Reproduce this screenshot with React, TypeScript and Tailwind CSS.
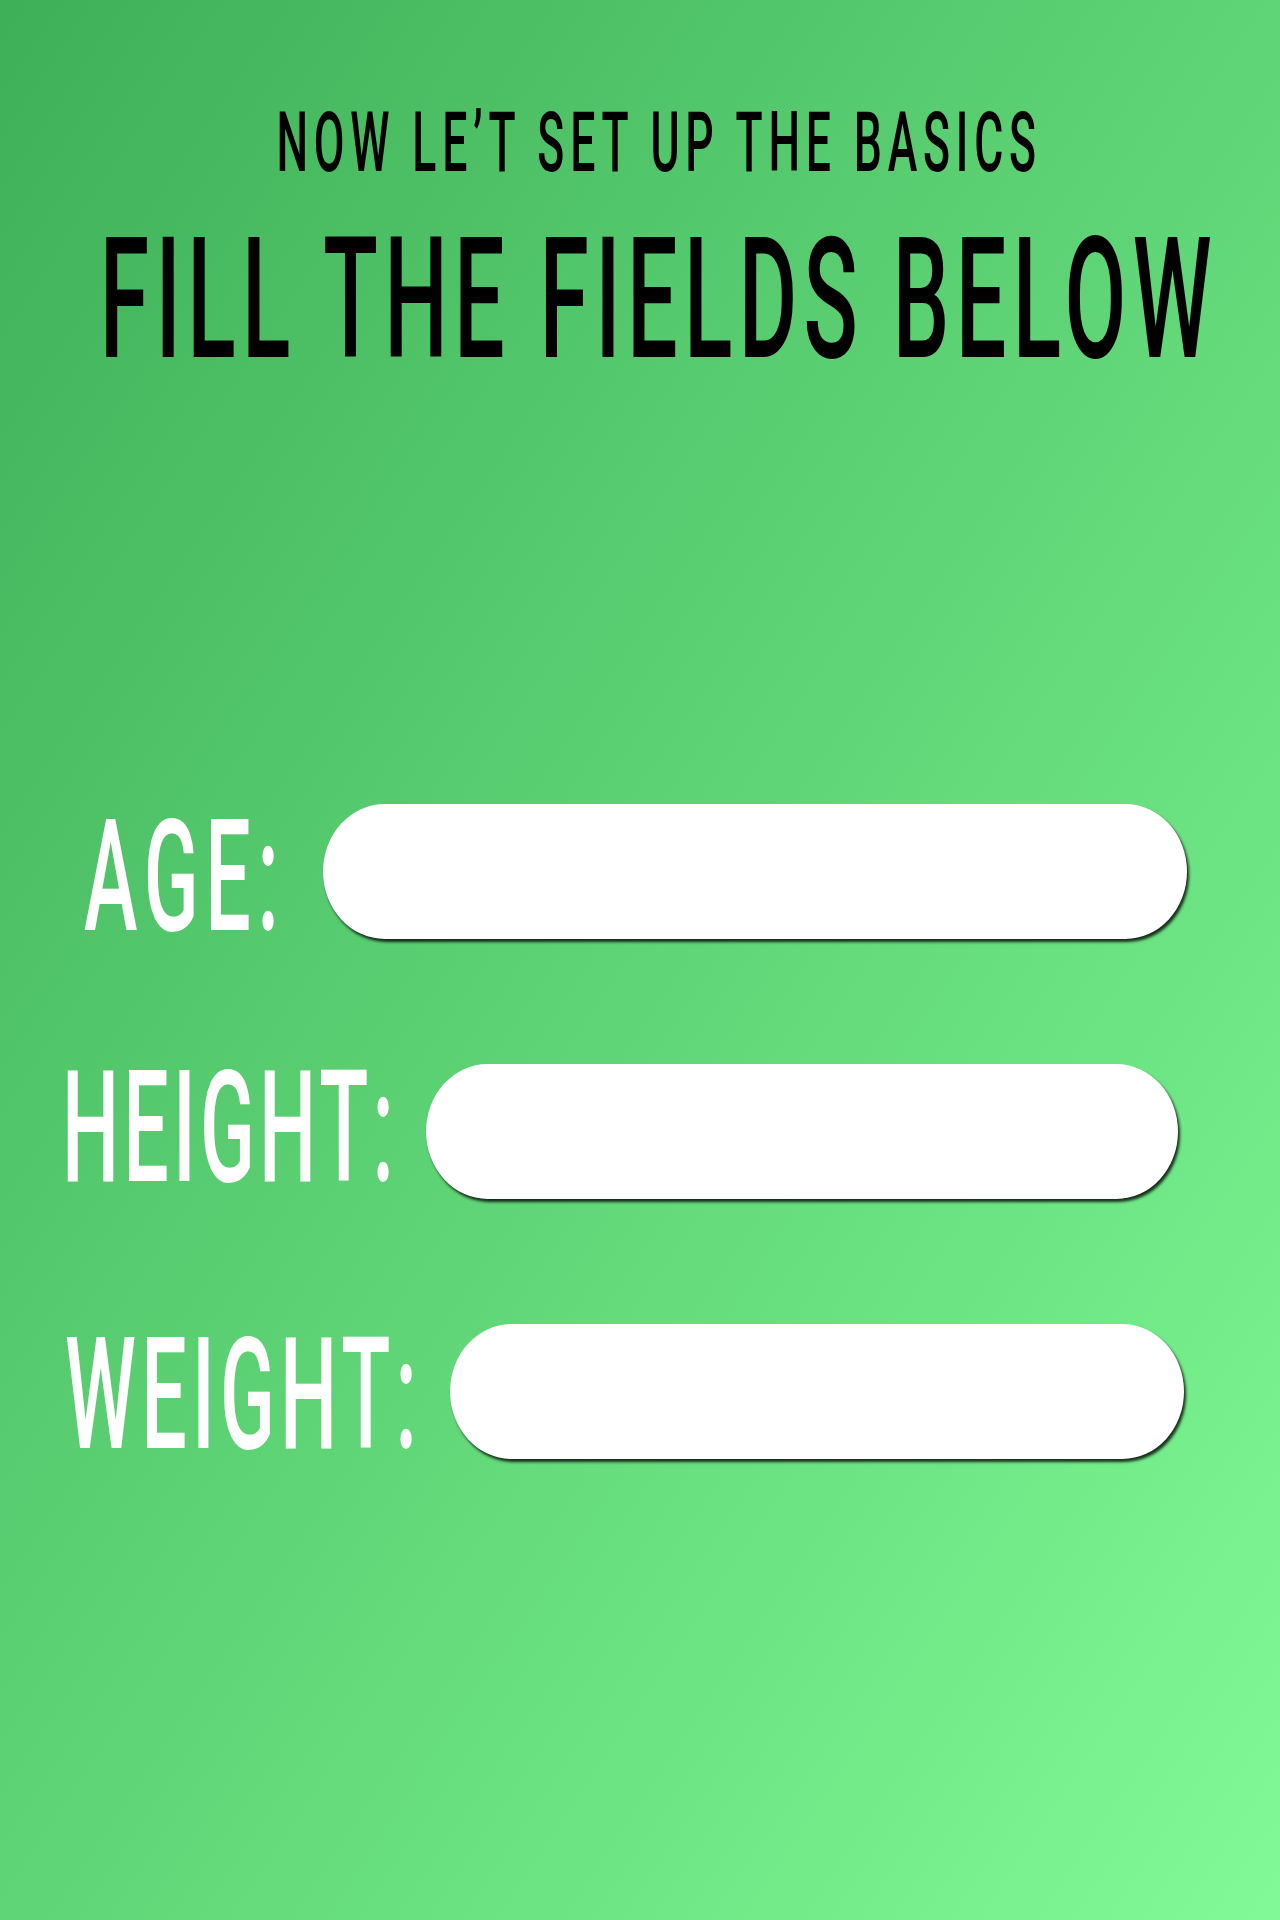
import React from 'react';

type FieldRow = {
  label: string;
  rowClass: string;
  labelClass: string;
  textClass: string;
  fieldClass: string;
};

const rows: FieldRow[] = [
  { label: 'AGE:', rowClass: 'pl-[84px]', labelClass: 'w-[239px] pt-[12px]', textClass: 'tracking-[13px]', fieldClass: 'w-[864px]' },
  { label: 'HEIGHT:', rowClass: 'pl-[62px]', labelClass: 'w-[364px] pb-[7px]', textClass: 'tracking-[8px]', fieldClass: 'w-[752px]' },
  { label: 'WEIGHT:', rowClass: 'pl-[65px]', labelClass: 'w-[385px] pt-[8px]', textClass: 'tracking-[10px]', fieldClass: 'w-[734px]' },
];

const App: React.FC = () => {
  return (
    <div className="w-[1280px] min-h-[1920px] overflow-hidden bg-linear-to-br from-[#3eb058] to-[#80fa96] font-['Roboto',sans-serif]">
      <header className="flex flex-col items-center pt-[101px] pl-[38px]">
        <p className="whitespace-nowrap text-[84px] leading-none font-medium tracking-[11px] text-black scale-x-[0.53]">
          NOW LE’T SET UP THE BASICS
        </p>
        <h1 className="mt-[30px] whitespace-nowrap text-[169px] leading-none font-medium tracking-[12px] text-black scale-x-[0.53]">
          FILL THE FIELDS BELOW
        </h1>
      </header>

      <form className="mt-[420px] flex flex-col gap-[125px]">
        {rows.map((row) => (
          <div key={row.label} className={`flex h-[135px] items-center ${row.rowClass}`}>
            <label className={`shrink-0 ${row.labelClass}`}>
              <span
                className={`inline-block origin-left whitespace-nowrap text-[155px] leading-none font-medium text-white scale-x-[0.52] ${row.textClass}`}
              >
                {row.label}
              </span>
            </label>
            <input
              type="text"
              className={`h-[135px] shrink-0 rounded-[62px/68px] bg-white px-16 text-5xl outline-none shadow-[2px_3px_3px_rgba(0,0,0,0.8)] ${row.fieldClass}`}
            />
          </div>
        ))}
      </form>
    </div>
  );
};

export default App;
